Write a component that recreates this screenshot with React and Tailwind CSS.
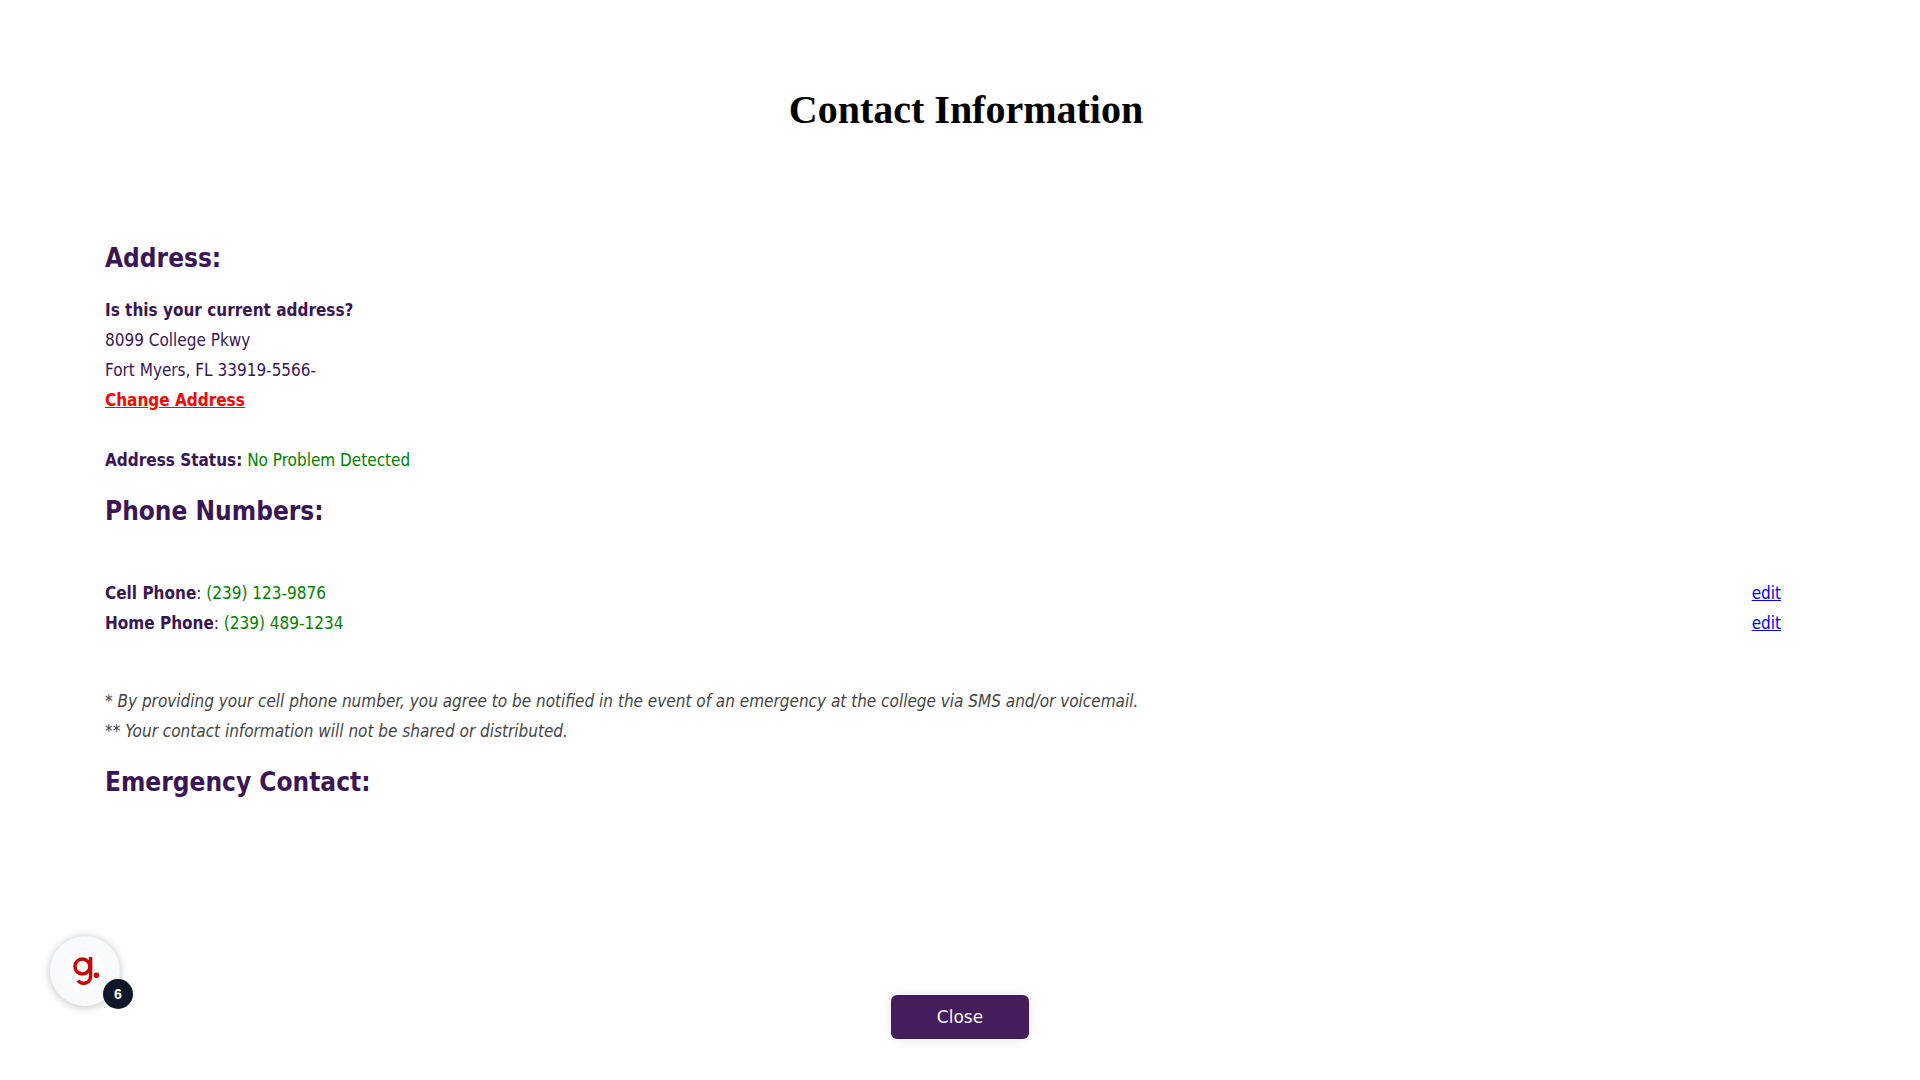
const PHONES = [
  { label: 'Cell Phone', number: '(239) 123-9876' },
  { label: 'Home Phone', number: '(239) 489-1234' },
];

function SectionHeading({ children }) {
  return <h2 className="text-[26px] leading-8 font-bold">{children}</h2>;
}

function GuideButton() {
  return (
    <button
      type="button"
      aria-label="Open guides, 6 available"
      className="fixed bottom-[74px] left-[50px] flex size-[70px] items-center justify-center rounded-full bg-[#f8fafc] shadow-[0_1px_8px_rgba(0,0,0,0.25)]"
    >
      <svg viewBox="0 0 70 70" className="size-full" fill="none" stroke="#cc0000" strokeWidth="3.4" aria-hidden="true">
        <circle cx="35" cy="35" r="20" fill="#ffffff" stroke="none" />
        <circle cx="32.4" cy="30.5" r="7.5" />
        <path d="M40.6 21v18.7c0 8.4-9.4 9.4-12.6 4.9" />
        <circle cx="46.4" cy="39.3" r="2.8" fill="#cc0000" stroke="none" />
      </svg>
      <span className="absolute top-[43px] left-[53px] flex size-[30px] items-center justify-center rounded-full bg-[#0f172a] font-['Liberation_Sans',sans-serif] text-sm font-bold text-white">6</span>
    </button>
  );
}

export default function App() {
  return (
    <div className="flex min-h-screen flex-col bg-white font-['DejaVu_Sans_Condensed','Noto_Sans',sans-serif] text-[17px] leading-[30px] text-[#3b1656]">
      <h1 className="pt-[86px] pl-3 text-center font-['Liberation_Serif',serif] text-[40px] leading-[48px] font-bold text-black">Contact Information</h1>

      <main className="px-[105px] pt-[108px]">
        <SectionHeading>Address:</SectionHeading>
        <div className="pt-[21px]">
          <p className="font-bold">Is this your current address?</p>
          <p>8099 College Pkwy</p>
          <p>Fort Myers, FL 33919-5566-</p>
          <p><a href="#address" className="font-bold text-[#ff0000] underline">Change Address</a></p>
        </div>
        <p className="pt-[30px] pb-5"><b>Address Status:</b> <span className="text-[#008000]">No Problem Detected</span></p>

        <SectionHeading>Phone Numbers:</SectionHeading>
        <ul className="pt-[51px] pr-[34px]">
          {PHONES.map((phone) => (
            <li key={phone.label} className="flex justify-between">
              <span><b>{phone.label}</b>: <span className="text-[#008000]">{phone.number}</span></span>
              <a href="#edit" aria-label={`edit ${phone.label}`} className="text-[#0000ee] underline">edit</a>
            </li>
          ))}
        </ul>

        <div className="pt-12 pb-5 text-[#444444] italic">
          <p>* By providing your cell phone number, you agree to be notified in the event of an emergency at the college via SMS and/or voicemail.</p>
          <p>** Your contact information will not be shared or distributed.</p>
        </div>
        <SectionHeading>Emergency Contact:</SectionHeading>
      </main>

      <footer className="mt-auto flex justify-center pb-[41px]">
        <button type="button" className="h-11 w-[138px] rounded-md bg-[#451c5c] font-['DejaVu_Sans',sans-serif] text-[17px] text-white shadow-[0_0_12px_rgba(0,0,0,0.1)]">Close</button>
      </footer>
      <GuideButton />
    </div>
  );
}
